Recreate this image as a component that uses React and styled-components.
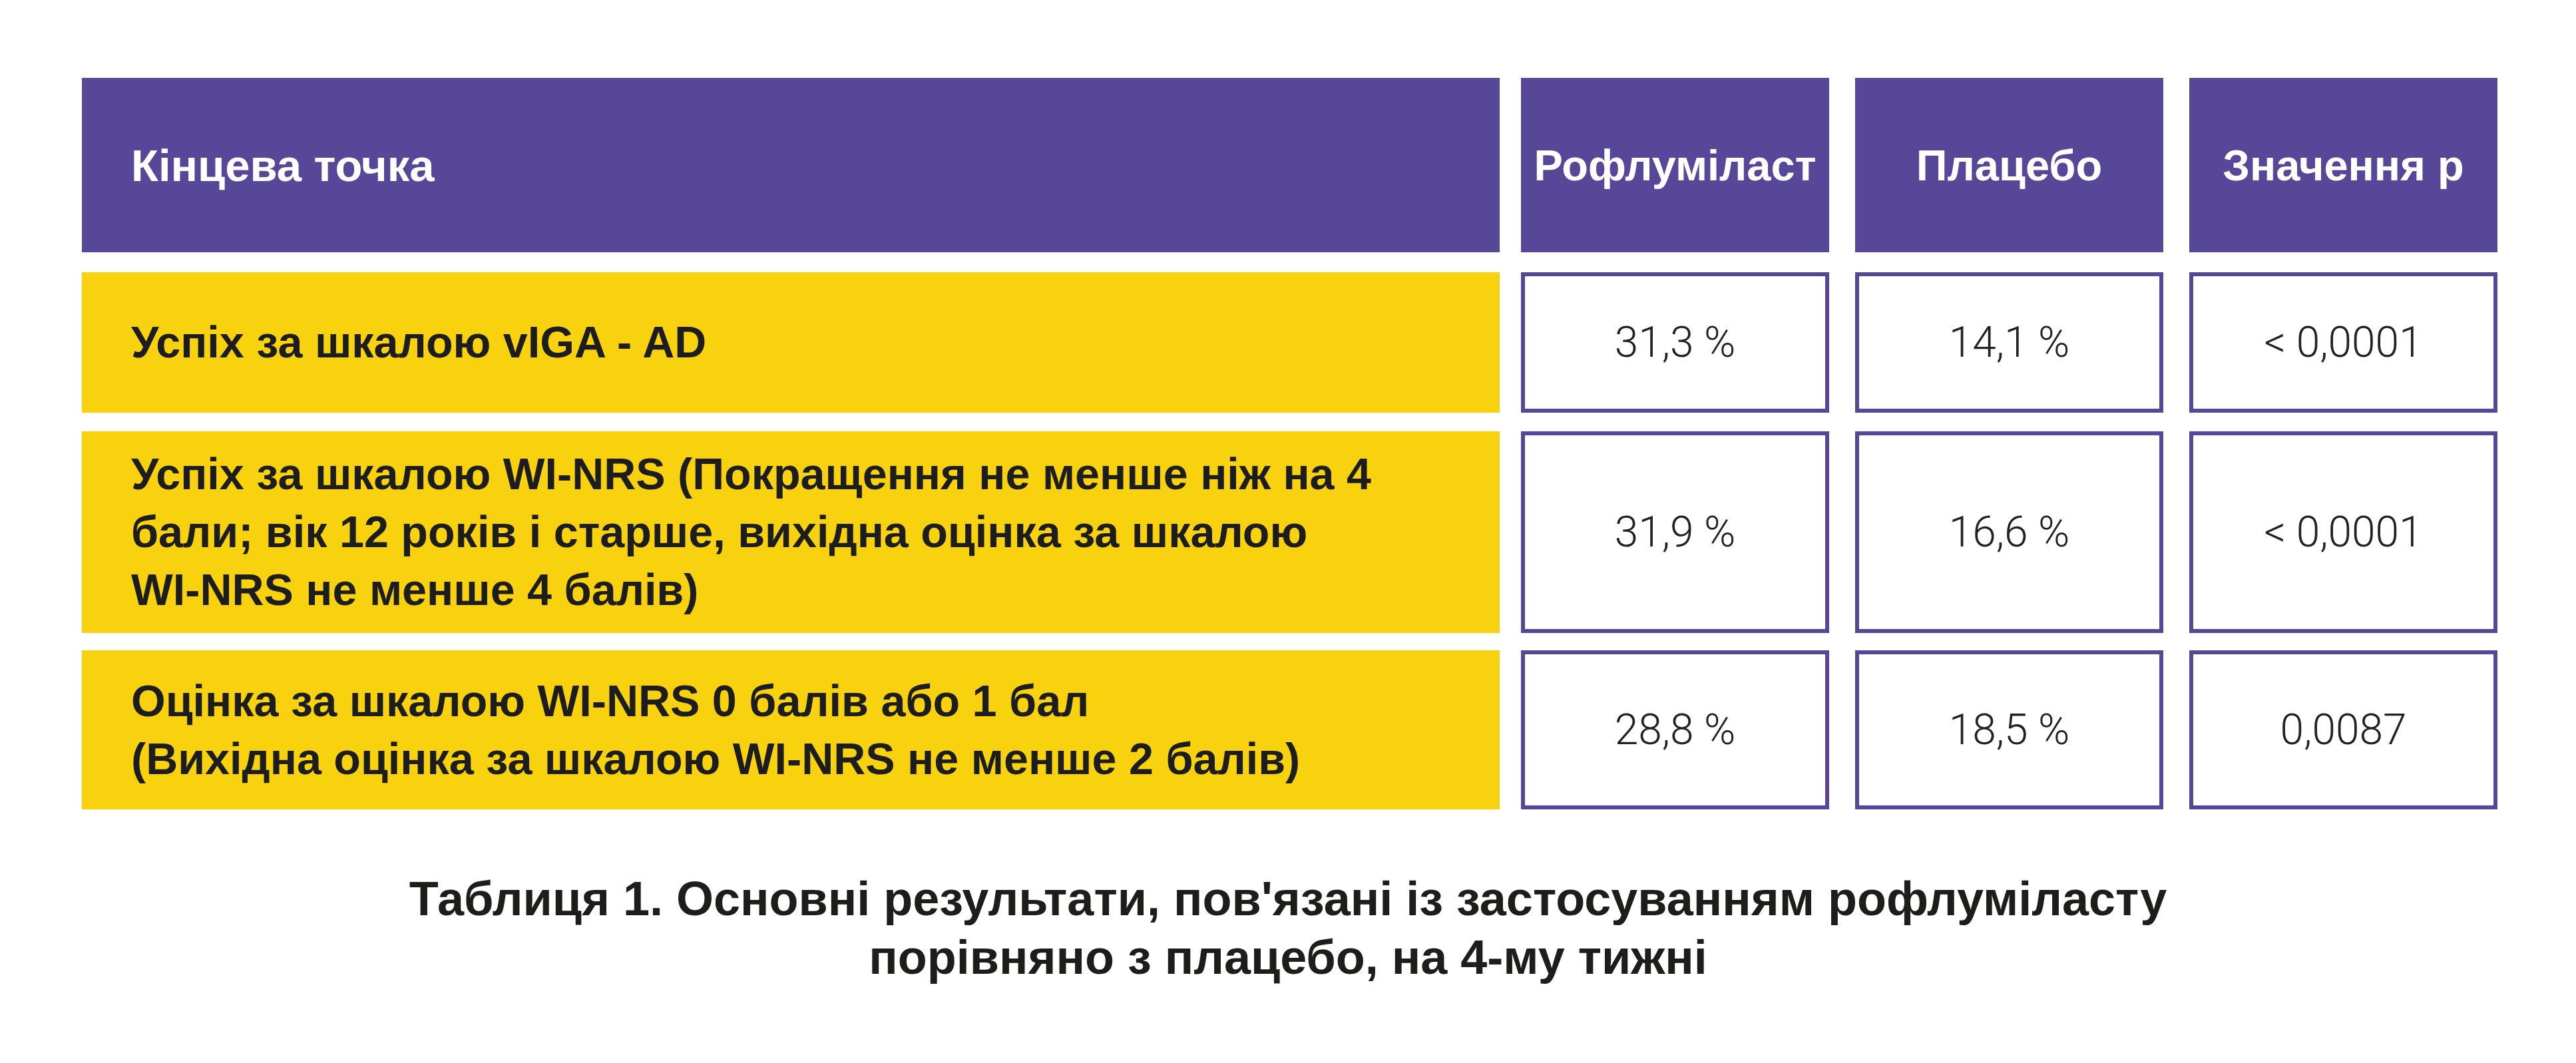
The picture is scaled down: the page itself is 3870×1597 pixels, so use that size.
import React from "react";
import styled, { createGlobalStyle } from "styled-components";

const Global = createGlobalStyle`
  html, body { margin: 0; padding: 0; background: #ffffff; }
  body { width: 3870px; min-height: 1597px; font-family: "Liberation Sans", Arial, sans-serif; }
`;

const PURPLE = "#574798";
const YELLOW = "#F8D20F";
const INK = "#1d1d1b";

const Page = styled.div`
  width: 3870px;
  height: 1597px;
  box-sizing: border-box;
  padding: 117px 0 0 123px;
  display: flex;
  flex-direction: column;
`;

const Table = styled.div`
  display: flex;
  flex-direction: column;
`;

const Row = styled.div`
  display: grid;
  grid-template-columns: 2162px 502px 502px 463px;
  height: ${(p) => p.$height}px;
  margin-top: ${(p) => p.$top || 0}px;
`;

const HeadLabel = styled.div`
  width: 2130px;
  height: 100%;
  box-sizing: border-box;
  background: ${PURPLE};
  color: #ffffff;
  font-family: "Liberation Sans", Arial, sans-serif;
  font-weight: 700;
  font-size: 67px;
  display: flex;
  align-items: center;
  padding-left: 74px;
`;

const HeadValue = styled.div`
  width: 463px;
  height: 100%;
  background: ${PURPLE};
  color: #ffffff;
  font-family: "Liberation Sans", Arial, sans-serif;
  font-weight: 700;
  font-size: 65px;
  display: flex;
  align-items: center;
  justify-content: center;
  white-space: nowrap;
`;

const Label = styled.div`
  width: 2130px;
  height: 100%;
  box-sizing: border-box;
  background: ${YELLOW};
  color: ${INK};
  font-family: "Liberation Sans", Arial, sans-serif;
  font-weight: 700;
  font-size: 66.5px;
  line-height: 87px;
  display: flex;
  flex-direction: column;
  justify-content: center;
  padding-left: 74px;
`;

const Line = styled.span`
  display: block;
  white-space: nowrap;
`;

const Value = styled.div`
  width: 463px;
  height: 100%;
  box-sizing: border-box;
  border: 6px solid ${PURPLE};
  background: #ffffff;
  color: #222222;
  font-family: Roboto, "Liberation Sans", Arial, sans-serif;
  font-weight: 300;
  font-size: 64px;
  display: flex;
  align-items: center;
  justify-content: center;
  white-space: nowrap;
`;

const Caption = styled.div`
  width: 3870px;
  margin-left: -123px;
  margin-top: 90px;
  text-align: center;
  color: ${INK};
  font-family: "Liberation Sans", Arial, sans-serif;
  font-weight: 700;
  font-size: 72px;
  line-height: 88px;
`;

const rows = [
  {
    height: 211,
    top: 30,
    lines: ["Успіх за шкалою vIGA - AD"],
    values: ["31,3 %", "14,1 %", "< 0,0001"],
  },
  {
    height: 303,
    top: 28,
    lines: [
      "Успіх за шкалою WI-NRS (Покращення не менше ніж на 4",
      "бали; вік 12 років і старше, вихідна оцінка за шкалою",
      "WI-NRS не менше 4 балів)",
    ],
    values: ["31,9 %", "16,6 %", "< 0,0001"],
  },
  {
    height: 239,
    top: 26,
    lines: [
      "Оцінка за шкалою WI-NRS 0 балів або 1 бал",
      "(Вихідна оцінка за шкалою WI-NRS не менше 2 балів)",
    ],
    values: ["28,8 %", "18,5 %", "0,0087"],
  },
];

export default function App() {
  return (
    <>
      <Global />
      <Page>
        <Table>
          <Row $height={262}>
            <HeadLabel>Кінцева точка</HeadLabel>
            <HeadValue>Рофлуміласт</HeadValue>
            <HeadValue>Плацебо</HeadValue>
            <HeadValue>Значення р</HeadValue>
          </Row>
          {rows.map((r, i) => (
            <Row key={i} $height={r.height} $top={r.top}>
              <Label>
                {r.lines.map((l, j) => (
                  <Line key={j}>{l}</Line>
                ))}
              </Label>
              {r.values.map((v, j) => (
                <Value key={j}>{v}</Value>
              ))}
            </Row>
          ))}
        </Table>
        <Caption>
          <Line>Таблиця 1. Основні результати, пов'язані із застосуванням рофлуміласту</Line>
          <Line>порівняно з плацебо, на 4-му тижні</Line>
        </Caption>
      </Page>
    </>
  );
}
